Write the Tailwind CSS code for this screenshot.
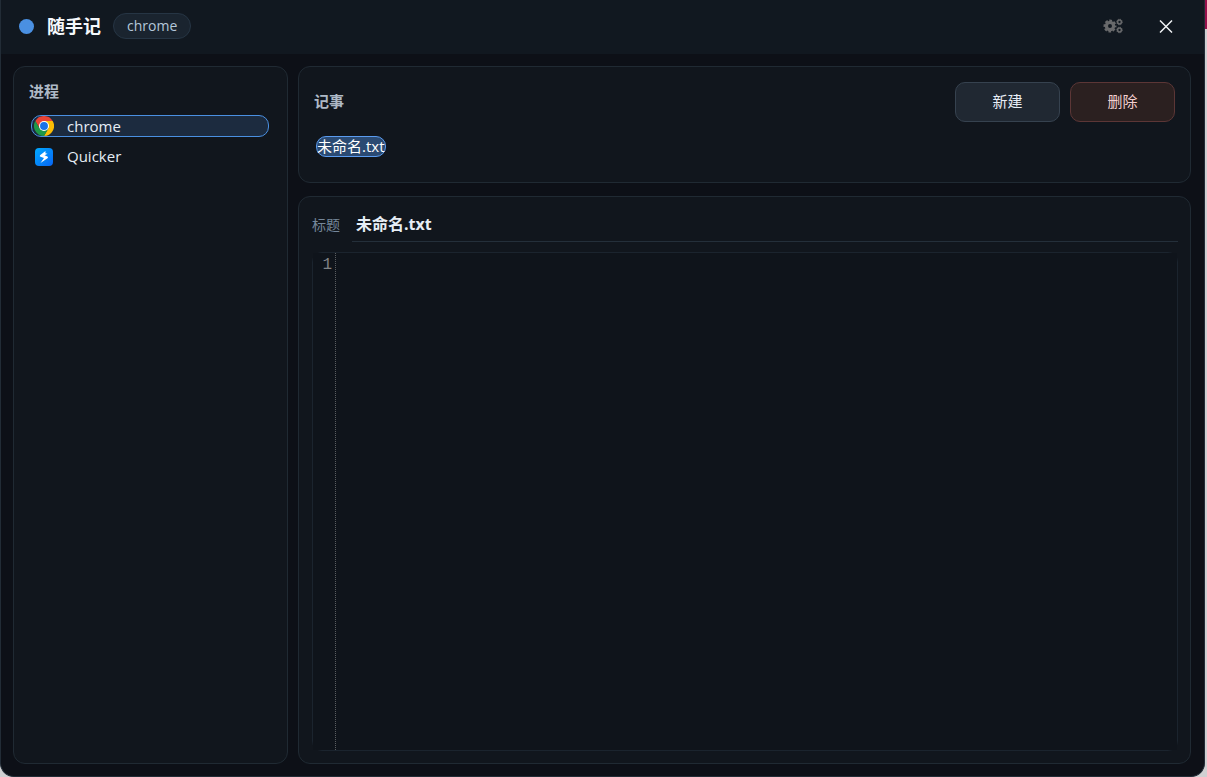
<!DOCTYPE html>
<html lang="zh-CN">
  <head>
    <meta charset="UTF-8" />
    <meta name="viewport" content="width=device-width, initial-scale=1.0" />
    <title>随手记</title>
    <script src="https://cdn.jsdelivr.net/npm/@tailwindcss/browser@4"></script>
  </head>
  <body
    class="h-screen overflow-hidden bg-[#d0d0d2] bg-linear-to-b from-[#98104c] from-[29px] to-[#d0d0d2] to-[29px] pr-0.5 font-['Open_Sans','Noto_Sans_CJK_SC',sans-serif] text-[15px] leading-5 text-[#e6edf5]"
  >
    <div
      class="flex h-full flex-col overflow-hidden rounded-b-[14px] border border-t-0 border-[#222c36] bg-[#0d1017]"
    >
      <!-- Title bar -->
      <header class="flex h-[54px] shrink-0 items-center bg-[#111820] pr-[22px] pb-0.5 pl-[18px]">
        <span class="size-[15px] rounded-full bg-[#4a90e2]"></span>
        <h1 class="ml-[13px] text-lg font-bold text-[#f5f8fc]">随手记</h1>
        <span
          class="ml-3 flex h-[26px] items-center rounded-full border border-[#263544] bg-[#1a242f] px-[13px] text-sm text-[#b4c7da]"
          >chrome</span
        >
        <button class="ml-auto flex h-8 w-8 items-center justify-center" aria-label="设置">
          <svg class="h-4 w-5" viewBox="0 0 20 16" fill="none" stroke="#68696b">
            <circle cx="7" cy="8" r="3.6" stroke-width="3.2" />
            <circle cx="7" cy="8" r="5.4" stroke-width="2.2" stroke-dasharray="2.64 1.6" stroke-dashoffset="1.32" />
            <circle cx="16.5" cy="4" r="1.9" stroke-width="1.5" />
            <circle cx="16.5" cy="4" r="2.8" stroke-width="0.9" stroke-dasharray="1.2 1" />
            <circle cx="16.5" cy="12" r="1.9" stroke-width="1.5" />
            <circle cx="16.5" cy="12" r="2.8" stroke-width="0.9" stroke-dasharray="1.2 1" />
          </svg>
        </button>
        <button class="ml-[21px] flex h-8 w-8 items-center justify-center" aria-label="关闭">
          <svg class="size-[14px]" viewBox="0 0 14 14" fill="none" stroke="#f0f2f4" stroke-width="1.5">
            <path d="M1 1.5l12 12M13 1.5L1 13.5" />
          </svg>
        </button>
      </header>

      <main class="flex min-h-0 flex-1 gap-2.5 py-3 pr-[13px] pl-3">
        <!-- Process list -->
        <aside class="w-[275px] shrink-0 rounded-xl border border-[#202a33] bg-[#11161d] px-[15px] pt-3.5">
          <h2 class="font-semibold text-[#aeb9c6]">进程</h2>
          <ul class="mt-3.5 mr-[3px] ml-0.5 flex flex-col gap-2">
            <li>
              <button
                class="flex h-[22px] w-full items-center gap-[13px] rounded-[10px] border border-[#4a90e2] bg-[#1c2b3f] pl-0.5 text-left"
              >
                <svg class="h-5 w-5" viewBox="0 0 48 48">
                  <path fill="#ea4335" d="M3.2 12A24 24 0 0 1 44.8 12L24 12L13.6 30Z" />
                  <path fill="#fbbc04" d="M44.8 12A24 24 0 0 1 24 48L34.4 30L24 12Z" />
                  <path fill="#1e9847" d="M24 48A24 24 0 0 1 3.2 12L13.6 30L34.4 30Z" />
                  <circle cx="24" cy="24" r="12" fill="#fff" />
                  <circle cx="24" cy="24" r="9.5" fill="#1a73e8" />
                </svg>
                chrome
              </button>
            </li>
            <li>
              <button
                class="flex h-[22px] w-full items-center gap-[13px] rounded-[10px] border border-transparent pl-0.5 text-left"
              >
                <svg class="h-5 w-5" viewBox="0 0 20 20">
                  <defs>
                    <linearGradient id="quicker" x1="0" y1="0" x2="1" y2="1">
                      <stop stop-color="#00aaff" />
                      <stop offset="1" stop-color="#0865f5" />
                    </linearGradient>
                  </defs>
                  <rect x="1" y="2" width="18" height="18" rx="4" fill="url(#quicker)" />
                  <path
                    fill="#fff"
                    d="M11.5 5L6 9.2Q5.3 10.2 6.5 10.7L10 12L6.5 17L13.5 12.2Q14.6 11 13.4 10.4L10.5 9.3L13.5 7.7L11.4 7.2Z"
                  />
                </svg>
                Quicker
              </button>
            </li>
          </ul>
        </aside>

        <div class="flex min-w-0 flex-1 flex-col gap-[13px]">
          <!-- Notes -->
          <section class="h-[117px] shrink-0 rounded-xl border border-[#202a33] bg-[#11161d] p-[15px]">
            <div class="flex items-center gap-2.5">
              <h2 class="mr-auto pb-0.5 font-semibold text-[#aeb9c6]">记事</h2>
              <button class="h-10 w-[105px] rounded-[10px] border border-[#36424f] bg-[#202832] pb-0.5">
                新建
              </button>
              <button
                class="h-10 w-[105px] rounded-[10px] border border-[#5c3636] bg-[#2b2020] pb-0.5 text-[#f3cfcf]"
              >
                删除
              </button>
            </div>
            <button
              class="mt-3.5 ml-0.5 flex h-[21px] items-center rounded-[10px] border border-[#5b9cf0] bg-[#2b4a72] pb-0.5 text-white"
            >
              未命名.txt
            </button>
          </section>

          <!-- Editor -->
          <section
            class="flex min-h-0 flex-1 flex-col rounded-xl border border-[#202a33] bg-[#11161d] pt-[11px] pr-3 pb-3 pl-[13px]"
          >
            <div class="flex items-center gap-3">
              <label for="title" class="text-sm text-[#75879a]">标题</label>
              <input
                id="title"
                type="text"
                value="未命名.txt"
                class="h-[34px] min-w-0 flex-1 border-b border-[#242f3a] px-1 pb-1 text-base font-bold outline-none"
              />
            </div>
            <!-- the gutter and text area are square, so they cover the rounded corners -->
            <div
              class="mt-2.5 flex min-h-0 flex-1 rounded-[10px] border border-[#1b242e] bg-[#0f141b] font-['Liberation_Mono',monospace] text-base leading-6"
            >
              <div
                class="w-[23px] border-r border-dotted border-[#5a5d60] bg-[#0f141b] pr-[3px] text-right text-[#808386]"
              >
                1
              </div>
              <textarea
                aria-label="内容"
                class="min-w-0 flex-1 resize-none bg-[#0f141b] px-1 outline-none"
              ></textarea>
            </div>
          </section>
        </div>
      </main>
    </div>
  </body>
</html>
